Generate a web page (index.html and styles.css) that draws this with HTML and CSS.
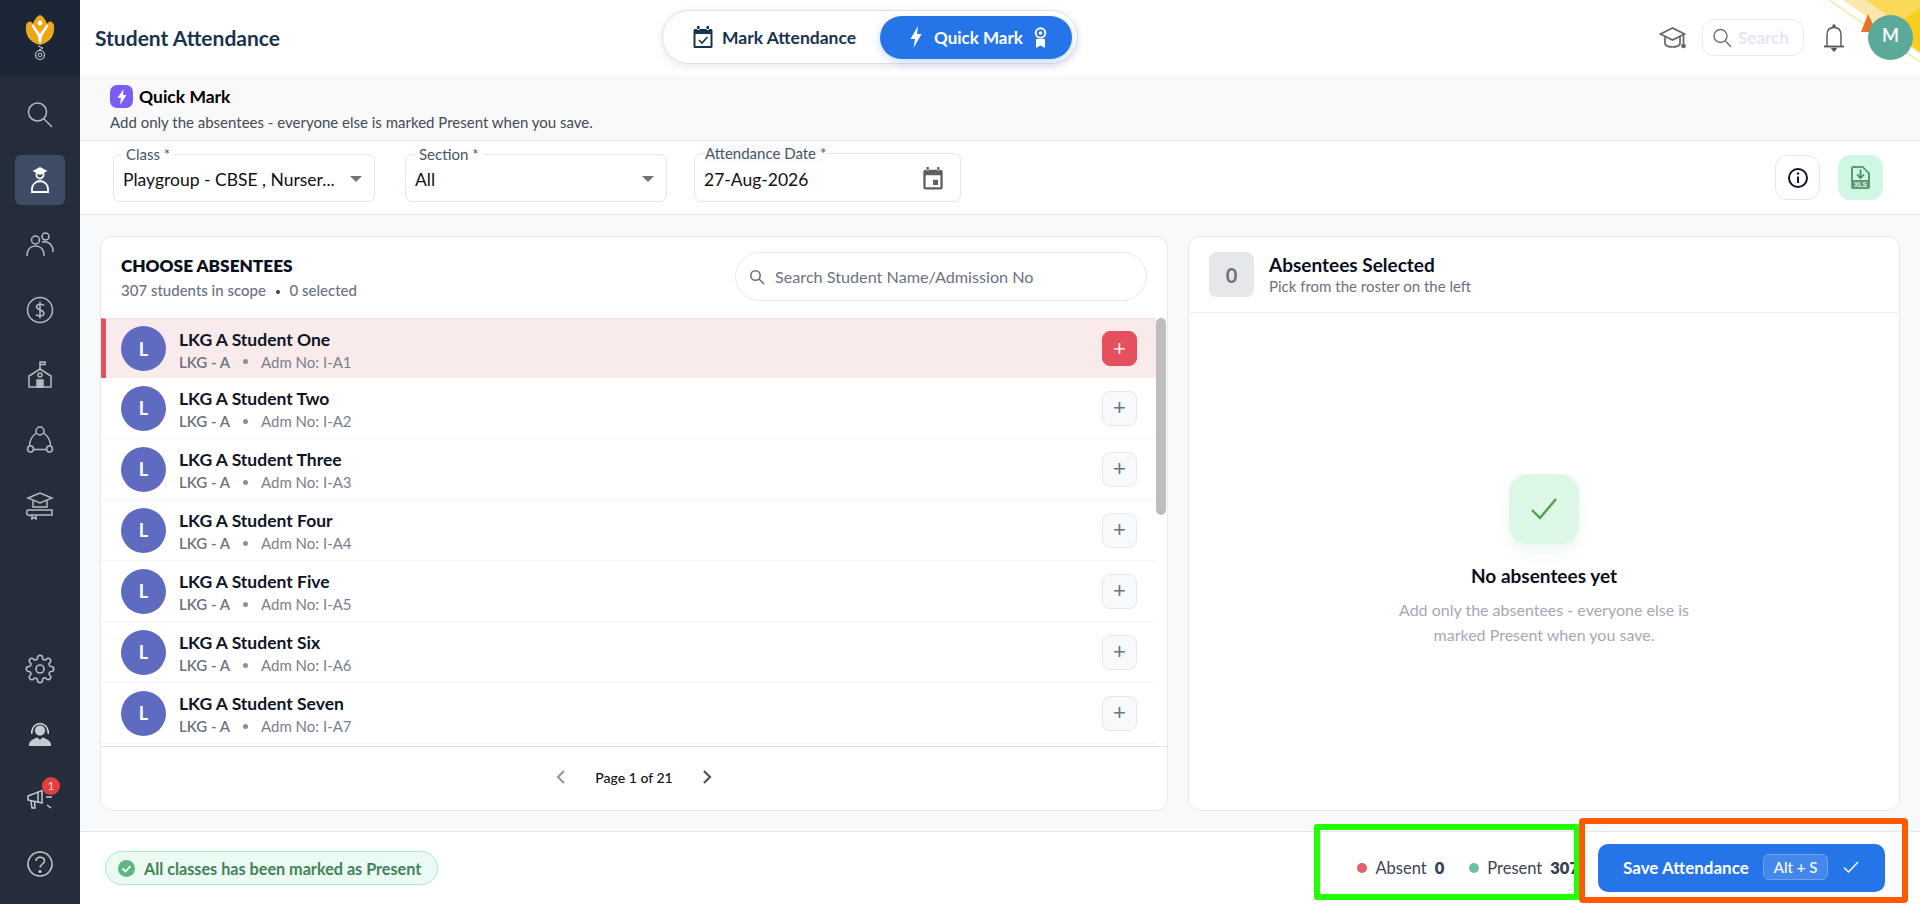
FILE: index.html
```html
<!DOCTYPE html>
<html lang="en">
<head>
  <meta charset="UTF-8">
  <title>Student Attendance</title>
  <meta name="viewport" content="width=device-width, initial-scale=1.0">
  <link rel="stylesheet" href="styles.css">
</head>
<body>
  <aside class="sidebar">
    <div class="logo">
      <svg width="30" height="46" viewBox="0 0 30 46">
        <path d="M1 10 C3 5 7 6 8 9 C9 5 12 1 15 0 C18 1 21 5 22 9 C23 6 27 5 29 10 C30 20 26 27 15 30 C4 27 0 20 1 10Z" fill="#eba81c"/>
        <path d="M8 9 L15 19 L22 9 L23.5 11 L17 21 L16 28 L14 28 L13 21 L6.5 11Z" fill="#fff"/>
        <circle cx="15" cy="8" r="2.4" fill="#fff"/>
        <circle cx="15" cy="40" r="4.5" fill="none" stroke="#c9ccd2" stroke-width="1.2"/>
        <circle cx="15" cy="40" r="1.8" fill="none" stroke="#c9ccd2" stroke-width="1"/>
        <path d="M13 31 L18 33 L14 35" fill="none" stroke="#c9ccd2" stroke-width="1"/>
      </svg>
    </div>
    <nav class="nav-top">
      <a class="nav-item"><svg width="30" height="30" viewBox="0 0 30 30" fill="none" stroke="#b4bac3" stroke-width="1.5"><circle cx="12.5" cy="12" r="9"/><path d="M19 19 L27 27"/></svg></a>
      <a class="nav-item active"><svg width="30" height="30" viewBox="0 0 30 30" fill="none" stroke="#fff" stroke-width="1.8"><path d="M9.5 6 L15 3 L20.5 6 L15 9Z" fill="#fff"/><path d="M11.5 8 V10 A3.5 3.5 0 0 0 18.5 10 V8"/><path d="M7 27 V24 C7 19 11 16.5 15 16 C19 16.5 23 19 23 24 V27Z"/></svg></a>
      <a class="nav-item"><svg width="30" height="30" viewBox="0 0 30 30" fill="none" stroke="#b4bac3" stroke-width="1.5"><circle cx="10.5" cy="10" r="4"/><circle cx="20.5" cy="6.5" r="3.5"/><path d="M2 26 C2 19 6 16 10.5 16 C15 16 19 19 19 26"/><path d="M17 12 C23 11 28 14 28 22"/></svg></a>
      <a class="nav-item"><svg width="30" height="30" viewBox="0 0 30 30" fill="none" stroke="#b4bac3" stroke-width="1.5"><circle cx="15" cy="15" r="12.5"/><path d="M19 10.5 C18 9 12 8.5 11.5 11.5 C11 15 19 14.5 19 18.5 C19 21.5 12.5 21.5 11 19.5 M15 6.5 V23.5"/></svg></a>
      <a class="nav-item"><svg width="30" height="30" viewBox="0 0 30 30" fill="none" stroke="#b4bac3" stroke-width="1.5"><path d="M15 9 V2 H20 V4.5 H15"/><path d="M4 27 V16 L15 9 L26 16 V27Z"/><circle cx="15" cy="15" r="2"/><rect x="12" y="20" width="6" height="7" fill="#b4bac3"/></svg></a>
      <a class="nav-item"><svg width="30" height="30" viewBox="0 0 30 30" fill="none" stroke="#b4bac3" stroke-width="1.5"><circle cx="15" cy="6" r="4"/><circle cx="5.5" cy="24" r="3"/><circle cx="24.5" cy="24" r="3"/><path d="M11.5 8 C7 11 4.5 16 4.5 21 M18.5 8 C23 11 25.5 16 25.5 21 M8.5 24.5 H21.5"/></svg></a>
      <a class="nav-item"><svg width="30" height="30" viewBox="0 0 30 30" fill="none" stroke="#b4bac3" stroke-width="1.5"><path d="M3 8 L15 3 L27 8 L15 13Z"/><path d="M8 11 V17 H22 V11"/><path d="M3 20 H27 V25 H6 A2.5 2.5 0 0 1 3 20Z"/><path d="M7 25 V29 L9 27.5 L11 29 V25"/></svg></a>
    </nav>
    <nav class="nav-bottom">
      <a class="nav-item"><svg width="30" height="30" viewBox="0 0 24 24" fill="none" stroke="#b4bac3" stroke-width="1.3"><circle cx="12" cy="12" r="3.2"/><path d="M19.4 15a1.7 1.7 0 0 0 .3 1.8l.1.1a2 2 0 1 1-2.8 2.8l-.1-.1a1.7 1.7 0 0 0-2.9 1.2V21a2 2 0 1 1-4 0v-.1a1.7 1.7 0 0 0-2.9-1.2l-.1.1a2 2 0 1 1-2.8-2.8l.1-.1a1.7 1.7 0 0 0-1.2-2.9H3a2 2 0 1 1 0-4h.1a1.7 1.7 0 0 0 1.2-2.9l-.1-.1a2 2 0 1 1 2.8-2.8l.1.1a1.7 1.7 0 0 0 2.9-1.2V3a2 2 0 1 1 4 0v.1a1.7 1.7 0 0 0 2.9 1.2l.1-.1a2 2 0 1 1 2.8 2.8l-.1.1a1.7 1.7 0 0 0 1.2 2.9H21a2 2 0 1 1 0 4h-.1a1.7 1.7 0 0 0-1.5 1z"/></svg></a>
      <a class="nav-item"><svg width="26" height="26" viewBox="0 0 30 30" fill="none" stroke="#c6cbd2" stroke-width="1.8"><circle cx="15" cy="11" r="5" fill="#c6cbd2"/><path d="M6 12 A9 9 0 0 1 24 12"/><path d="M5.5 10 V15 M24.5 10 V15"/><path d="M3 28 C3 23 9 21 12 20 L15 23 L18 20 C21 21 27 23 27 28Z" fill="#c6cbd2"/></svg></a>
      <a class="nav-item nav-notice">
        <svg width="26" height="20" viewBox="0 0 26 20" fill="none" stroke="#c6cbd2" stroke-width="1.5"><path d="M1 7 L15 1.5 V14 L1 11Z"/><path d="M11 3 V13"/><path d="M4 12 L5 19 H8 L7.5 13"/><path d="M19 8 H25 M18.5 4 L22 1.5 M20 16 L24 19"/></svg>
        <span class="notice-badge">1</span>
      </a>
      <a class="nav-item"><svg width="30" height="30" viewBox="0 0 30 30" fill="none" stroke="#c6cbd2" stroke-width="1.5"><circle cx="15" cy="15" r="12"/><path d="M11 12 C11 7 19.5 7 19.5 12 C19.5 15 15 15.5 15 18.5"/><circle cx="15" cy="22.5" r=".8" fill="#c6cbd2"/></svg></a>
    </nav>
  </aside>

  <div class="page">
    <header class="topbar">
      <svg class="corner-art" width="100" height="70" viewBox="0 0 100 70">
        <path d="M9 0 L100 62" stroke="#fbe9b8" stroke-width="2"/>
        <path d="M23 0 H100 V54Z" fill="#fbe6ac"/>
        <path d="M46 0 H100 V40Z" fill="#f9d85a"/>
        <path d="M100 8 L68 30 L100 52Z" fill="#f6cf1e"/>
      </svg>
      <h1 class="page-title">Student Attendance</h1>
      <div class="mode-switch">
        <a class="mode-tab">
          <svg width="20" height="24" viewBox="0 0 20 24"><path d="M2 4 H18 A1.5 1.5 0 0 1 19.5 5.5 V21.5 A1.5 1.5 0 0 1 18 23 H2 A1.5 1.5 0 0 1 .5 21.5 V5.5 A1.5 1.5 0 0 1 2 4Z M2.5 9 V21 H17.5 V9Z M4 1 H6.5 V5 H4Z M13.5 1 H16 V5 H13.5Z" fill="#19334d" fill-rule="evenodd"/><path d="M6 15 L9 18 L14.5 12" fill="none" stroke="#19334d" stroke-width="1.6"/></svg>
          Mark Attendance
        </a>
        <a class="mode-tab active">
          <svg width="14" height="24" viewBox="0 0 14 24"><path d="M9 1 L1.5 14 H6 L4.5 23 L12.5 9 H8Z" fill="#fff"/></svg>
          Quick Mark
          <svg width="13" height="24" viewBox="0 0 13 24" fill="none"><circle cx="6.5" cy="8" r="4.8" stroke="#fff" stroke-width="2"/><circle cx="6.5" cy="8" r="1.8" fill="#fff"/><path d="M2 14 H11 V23 L6.5 20.5 L2 23Z" fill="#fff"/></svg>
        </a>
      </div>
      <div class="topbar-right">
        <svg width="28" height="28" viewBox="0 0 28 28" fill="none" stroke="#666" stroke-width="1.7"><path d="M1.5 10 L13.5 4 L25.5 10 L13.5 16Z"/><path d="M6 12.5 V20 C8 24 19 24 21 20 V12.5"/><path d="M24.5 10.5 V20"/><circle cx="24.5" cy="22" r="1.5" fill="#666"/></svg>
        <div class="top-search">
          <svg width="20" height="22" viewBox="0 0 20 22" fill="none" stroke-width="1.4"><circle cx="8.5" cy="9" r="6.5" stroke="#6b7280"/><path d="M13.5 14 L19 20" stroke="#6b7280"/></svg>
          <span>Search</span>
        </div>
        <svg class="bell" width="22" height="28" viewBox="0 0 22 28" fill="none" stroke="#555" stroke-width="1.4"><path d="M4 22 V11 C4 6 7 3.5 11 3.5 C15 3.5 18 6 18 11 V22"/><path d="M1 22.5 H21" stroke-width="1.8"/><path d="M9 24.5 H13 L11 27Z" fill="#555"/><circle cx="11" cy="2" r="1" fill="#555"/></svg>
        <div class="avatar-wrap">
          <span class="corner-flag"></span>
          <div class="avatar">M</div>
        </div>
      </div>
    </header>

    <section class="quick-head">
      <div class="quick-title">
        <span class="quick-icon"><svg width="12" height="18" viewBox="0 0 12 18"><path d="M7.5 1 L1.5 10 H5 L4 17 L10.5 7 H7Z" fill="#fff"/></svg></span>
        Quick Mark
      </div>
      <p class="quick-sub">Add only the absentees - everyone else is marked Present when you save.</p>
    </section>

    <section class="filters">
      <div class="field field-class">
        <label>Class *</label>
        <span class="field-value">Playgroup - CBSE , Nurser...</span>
        <span class="caret"></span>
      </div>
      <div class="field field-section">
        <label>Section *</label>
        <span class="field-value">All</span>
        <span class="caret"></span>
      </div>
      <div class="field field-date">
        <label class="date-label">Attendance Date *</label>
        <span class="field-value">27-Aug-2026</span>
        <svg width="22" height="24" viewBox="0 0 22 26"><path d="M3 4 H19 A2.5 2.5 0 0 1 21.5 6.5 V23 A2.5 2.5 0 0 1 19 25.5 H3 A2.5 2.5 0 0 1 .5 23 V6.5 A2.5 2.5 0 0 1 3 4Z M3 10 V23 H19 V10Z M4 1 H6.5 V5 H4Z M15.5 1 H18 V5 H15.5Z M11 15 H16.5 V20.5 H11Z" fill="#5f5f5f" fill-rule="evenodd"/></svg>
      </div>
      <div class="filter-actions">
        <button class="btn-square btn-info"><svg width="22" height="22" viewBox="0 0 22 22" fill="none"><circle cx="11" cy="11" r="9" stroke="#0d1526" stroke-width="2"/><path d="M11 9.5 V16" stroke="#0d1526" stroke-width="2"/><circle cx="11" cy="6.5" r="1.2" fill="#0d1526"/></svg></button>
        <button class="btn-square btn-xls"><svg width="19" height="23" viewBox="0 0 19 23"><path d="M2 0 H12 L19 7 V21 A2 2 0 0 1 17 23 H2 A2 2 0 0 1 0 21 V2 A2 2 0 0 1 2 0Z" fill="#5a9e6f"/><path d="M2 2 H11.5 L17 7.5 V14 H2Z" fill="#cff7e3"/><path d="M9.5 3.5 V12 M6 8.5 L9.5 12 L13 8.5" fill="none" stroke="#3f8f58" stroke-width="1.7"/><text x="9.5" y="21" class="xls-text">XLS</text></svg></button>
      </div>
    </section>

    <main class="content">
      <section class="card roster">
        <div class="roster-head">
          <div>
            <h2>CHOOSE ABSENTEES</h2>
            <div class="roster-count">307 students in scope <i class="dot-dark"></i> 0 selected</div>
          </div>
          <div class="roster-search">
            <svg width="16" height="16" viewBox="0 0 16 16" fill="none" stroke="#6b7280" stroke-width="1.6"><circle cx="6.5" cy="6.5" r="4.7"/><path d="M10 10 L15 15"/></svg>
            <span>Search Student Name/Admission No</span>
          </div>
        </div>
        <div class="list-wrap">
          <ul class="student-list">
            <li class="student picked"><span class="initial">L</span><div class="student-info"><strong>LKG A Student One</strong><small><b>LKG - A</b><i></i>Adm No: I-A1</small></div><button class="add-btn">+</button></li>
            <li class="student"><span class="initial">L</span><div class="student-info"><strong>LKG A Student Two</strong><small><b>LKG - A</b><i></i>Adm No: I-A2</small></div><button class="add-btn">+</button></li>
            <li class="student"><span class="initial">L</span><div class="student-info"><strong>LKG A Student Three</strong><small><b>LKG - A</b><i></i>Adm No: I-A3</small></div><button class="add-btn">+</button></li>
            <li class="student"><span class="initial">L</span><div class="student-info"><strong>LKG A Student Four</strong><small><b>LKG - A</b><i></i>Adm No: I-A4</small></div><button class="add-btn">+</button></li>
            <li class="student"><span class="initial">L</span><div class="student-info"><strong>LKG A Student Five</strong><small><b>LKG - A</b><i></i>Adm No: I-A5</small></div><button class="add-btn">+</button></li>
            <li class="student"><span class="initial">L</span><div class="student-info"><strong>LKG A Student Six</strong><small><b>LKG - A</b><i></i>Adm No: I-A6</small></div><button class="add-btn">+</button></li>
            <li class="student"><span class="initial">L</span><div class="student-info"><strong>LKG A Student Seven</strong><small><b>LKG - A</b><i></i>Adm No: I-A7</small></div><button class="add-btn">+</button></li>
          </ul>
          <div class="scroll-track"><span class="scroll-thumb"></span></div>
        </div>
        <div class="pager">
          <svg width="12" height="16" viewBox="0 0 12 16" fill="none" stroke="#9a9a9a" stroke-width="2.2"><path d="M9 2 L3 8 L9 14"/></svg>
          <span>Page 1 of 21</span>
          <svg width="12" height="16" viewBox="0 0 12 16" fill="none" stroke="#555" stroke-width="2.2"><path d="M3 2 L9 8 L3 14"/></svg>
        </div>
      </section>

      <section class="card selected">
        <div class="selected-head">
          <span class="count-box">0</span>
          <div>
            <h3>Absentees Selected</h3>
            <p>Pick from the roster on the left</p>
          </div>
        </div>
        <div class="empty">
          <span class="empty-icon"><svg width="28" height="24" viewBox="0 0 28 24" fill="none" stroke="#55a045" stroke-width="2.4"><path d="M2 13 L10 21 L26 2"/></svg></span>
          <h4>No absentees yet</h4>
          <p>Add only the absentees - everyone else is<br>marked Present when you save.</p>
        </div>
      </section>
    </main>

    <footer class="footer">
      <div class="status-pill">
        <svg width="17" height="17" viewBox="0 0 17 17"><circle cx="8.5" cy="8.5" r="8.5" fill="#5fb67f"/><path d="M4.5 8.5 L7.5 11.5 L12.5 6" fill="none" stroke="#fff" stroke-width="1.8"/></svg>
        All classes has been marked as Present
      </div>
      <div class="tally">
        <span class="tally-item"><i class="dot dot-absent"></i>Absent <b>0</b></span>
        <span class="tally-item"><i class="dot dot-present"></i>Present <b>307</b></span>
      </div>
      <button class="save-btn">
        Save Attendance
        <span class="kbd">Alt + S</span>
        <svg width="18" height="14" viewBox="0 0 18 14" fill="none" stroke="#fff" stroke-width="1.4"><path d="M2 7.5 L6.5 12 L16 2"/></svg>
      </button>
    </footer>
  </div>

  <span class="mark mark-green"></span>
  <span class="mark mark-orange"></span>
</body>
</html>
```

FILE: styles.css
```css
* {
  box-sizing: border-box;
}
html, body {
  margin: 0;
  padding: 0;
  height: 100%;
  overflow: hidden;
  font-family: "Lato", "Noto Sans", sans-serif;
  color: #0d1526;
}
body {
  display: flex;
  background: #fff;
}
h1, h2, h3, h4, p, ul {
  margin: 0;
  padding: 0;
}
i {
  font-style: normal;
}

/* sidebar */
.sidebar {
  width: 80px;
  flex: none;
  background: #252d3a;
  display: flex;
  flex-direction: column;
}
.logo {
  height: 76px;
  background: #1c2636;
  display: flex;
  align-items: center;
  justify-content: center;
}
.nav-top {
  padding-top: 14px;
  display: flex;
  flex-direction: column;
  align-items: center;
  gap: 15px;
}
.nav-bottom {
  margin-top: auto;
  padding-bottom: 15px;
  display: flex;
  flex-direction: column;
  align-items: center;
  gap: 15px;
}
.nav-item {
  width: 50px;
  height: 50px;
  border-radius: 6px;
  display: flex;
  align-items: center;
  justify-content: center;
}
.nav-item.active {
  background: #3e4d65;
}
.nav-notice {
  position: relative;
}
.notice-badge {
  position: absolute;
  top: 3px;
  right: 5px;
  width: 18px;
  height: 18px;
  border-radius: 50%;
  background: #e53e3e;
  color: #fbd5d5;
  font-size: 12px;
  line-height: 18px;
  text-align: center;
}

/* main column */
.page {
  flex: 1;
  min-width: 0;
  display: flex;
  flex-direction: column;
}
.topbar {
  height: 75px;
  flex: none;
  background: #fff;
  padding: 0 7px 0 15px;
  display: flex;
  align-items: center;
  position: relative;
}
.corner-art {
  position: absolute;
  top: 0;
  right: 0;
}
.page-title {
  font-size: 21px;
  font-weight: 700;
  color: #19334d;
  width: 567px;
  flex: none;
}
.mode-switch {
  display: flex;
  align-items: center;
  width: 416px;
  height: 54px;
  margin-top: -1px;
  padding: 0 5px 0 30px;
  border: 1px solid #d9dfec;
  border-radius: 27px;
  box-shadow: 0 2px 8px rgba(60, 80, 140, 0.14);
}
.mode-tab {
  display: flex;
  align-items: center;
  gap: 9px;
  font-size: 17.5px;
  font-weight: 700;
  color: #19334d;
  white-space: nowrap;
}
.mode-tab.active {
  width: 192px;
  height: 43px;
  flex: none;
  margin-left: auto;
  padding-left: 29px;
  gap: 11px;
  border-radius: 22px;
  background: #2574e8;
  color: #fff;
  font-size: 17px;
  box-shadow: 0 3px 8px rgba(37, 116, 232, 0.25);
}
.topbar-right {
  margin-left: auto;
  display: flex;
  align-items: center;
  gap: 15px;
  position: relative;
}
.top-search {
  width: 102px;
  height: 37px;
  border: 1px solid #e6eaf3;
  border-radius: 12px;
  display: flex;
  align-items: center;
  gap: 6px;
  padding-left: 9px;
  margin-right: 4px;
  color: #e3e7f1;
  font-size: 17px;
  font-weight: 700;
}
.bell {
  margin-right: 8px;
}
.avatar-wrap {
  position: relative;
  width: 45px;
  height: 45px;
  margin-top: -1px;
}
.avatar {
  position: relative;
  width: 45px;
  height: 45px;
  border-radius: 50%;
  background: #5ca899;
  color: #f2fbf8;
  font-size: 18px;
  font-weight: 700;
  line-height: 41px;
  text-align: center;
}
.corner-flag {
  position: absolute;
  top: -1px;
  left: -7px;
  width: 0;
  height: 0;
  border-left: 7px solid transparent;
  border-right: 9px solid transparent;
  border-bottom: 18px solid #ea7424;
}
.quick-head {
  height: 66px;
  flex: none;
  background: #f9f9f9;
  border-bottom: 1px solid #e5e6f0;
  padding: 10px 30px 0;
}
.quick-title {
  display: flex;
  align-items: center;
  gap: 6px;
  font-size: 17.5px;
  font-weight: 700;
  color: #000;
}
.quick-icon {
  width: 23px;
  height: 23px;
  border-radius: 7px;
  background: #7c5cf5;
  display: flex;
  align-items: center;
  justify-content: center;
}
.quick-sub {
  font-size: 15px;
  line-height: 18px;
  color: #444b57;
  margin-top: 5px;
}

/* filter bar */
.filters {
  height: 74px;
  flex: none;
  background: #fff;
  border-bottom: 1px solid #e5e8f0;
  padding: 13px 37px 0 33px;
  display: flex;
  align-items: flex-start;
}
.field {
  position: relative;
  height: 48px;
  border: 1px solid #e3e7f2;
  border-radius: 7px;
  display: flex;
  align-items: center;
  padding: 2px 9px 0;
  font-size: 17.5px;
}
.field label {
  position: absolute;
  top: -9px;
  left: 8px;
  padding: 0 4px;
  background: #fff;
  color: #4a5563;
  font-size: 15px;
  line-height: 16px;
}
.field label.date-label {
  left: 10px;
  background: #f9f9f9;
  padding: 0;
}
.field-value {
  flex: 1;
  color: #111;
  white-space: nowrap;
}
.caret {
  width: 0;
  height: 0;
  border-left: 6px solid transparent;
  border-right: 6px solid transparent;
  border-top: 6px solid #757575;
  margin-right: 3px;
}
.field-class {
  width: 262px;
}
.field-section {
  width: 262px;
  margin-left: 30px;
}
.field-section label {
  left: 9px;
}
.field-date {
  width: 267px;
  height: 49px;
  margin: -1px 0 0 27px;
  padding-top: 4px;
}
.field-date svg {
  margin: -3px 7px 0 0;
}
.filter-actions {
  margin-left: auto;
  margin-top: 1px;
  display: flex;
  gap: 18px;
}
.btn-square {
  width: 45px;
  height: 45px;
  border-radius: 12px;
  border: 1px solid #e3e7f2;
  background: #fff;
  padding: 0;
  display: flex;
  align-items: center;
  justify-content: center;
}
.btn-xls {
  background: #cff7e3;
  border-color: #cff7e3;
}
.xls-text {
  font-family: "Liberation Sans", sans-serif;
  font-size: 6.5px;
  font-weight: 700;
  fill: #e4f7ec;
  text-anchor: middle;
}

/* panels */
.content {
  flex: 1;
  min-height: 0;
  background: #f8f9fb;
  padding: 21px 20px 20px 20px;
  display: flex;
  gap: 20px;
}
.card {
  background: #fff;
  border: 1px solid #e6e8f0;
  border-radius: 12px;
  display: flex;
  flex-direction: column;
  overflow: hidden;
}
.roster {
  width: 1068px;
  flex: none;
}
.selected {
  flex: 1;
}
.roster-head {
  height: 81px;
  flex: none;
  padding: 18px 20px 0 20px;
  display: flex;
  justify-content: space-between;
  align-items: flex-start;
}
.roster-head h2 {
  font-size: 17.2px;
  font-weight: 800;
  color: #0a0f1c;
  line-height: 22px;
}
.roster-count {
  font-size: 15px;
  line-height: 18px;
  color: #6b7280;
  font-weight: 500;
  margin-top: 4px;
}
.dot-dark {
  display: inline-block;
  width: 4px;
  height: 4px;
  border-radius: 50%;
  background: #374151;
  margin: 0 6px;
  vertical-align: 2px;
}
.roster-search {
  width: 412px;
  height: 49px;
  margin-top: -3px;
  border: 1px solid #e3e7f2;
  border-radius: 25px;
  display: flex;
  align-items: center;
  gap: 10px;
  padding-left: 13px;
  font-size: 16.2px;
  color: #6b7280;
}
.list-wrap {
  height: 429px;
  flex: none;
  border-bottom: 1px solid #e2e2e2;
  display: flex;
  overflow: hidden;
}
.student-list {
  list-style: none;
  flex: 1;
  min-width: 0;
}
.student {
  height: 61px;
  border-bottom: 1px solid #f5f6f8;
  display: flex;
  align-items: center;
  padding: 0 19px 0 20px;
  gap: 13px;
}
.student.picked {
  height: 60px;
  background: #f9eaeb;
  border-top: 1px solid #f6dfe1;
  border-bottom: 0;
  border-left: 5px solid #e5505f;
  padding-left: 15px;
}
.initial {
  width: 45px;
  height: 45px;
  flex: none;
  border-radius: 50%;
  background: #5f6bc0;
  color: #fff;
  font-size: 18px;
  font-weight: 700;
  display: flex;
  align-items: center;
  justify-content: center;
}
.student-info {
  flex: 1;
  min-width: 0;
  padding-top: 3px;
}
.student-info strong {
  display: block;
  font-size: 17.5px;
  font-weight: 700;
  color: #0d1526;
  line-height: 22px;
}
.student-info small {
  display: flex;
  align-items: center;
  font-size: 15px;
  color: #7a808a;
  line-height: 20px;
  margin-top: 1px;
}
.student-info b {
  font-weight: 600;
  color: #6b7280;
}
.student-info small i {
  width: 5px;
  height: 5px;
  border-radius: 50%;
  background: #8a8f98;
  margin: 0 13px;
}
.add-btn {
  width: 35px;
  height: 35px;
  flex: none;
  padding: 0;
  border: 1px solid #e5e7eb;
  border-radius: 8px;
  background: #f8f9fb;
  color: #6b7280;
  font-family: "Liberation Sans", sans-serif;
  font-size: 22px;
  line-height: 1;
}
.picked .add-btn {
  background: #e5505f;
  border-color: #e5505f;
  color: #fbe9eb;
}
.scroll-track {
  width: 10px;
  flex: none;
  margin-right: 1px;
}
.scroll-thumb {
  display: block;
  height: 197px;
  background: #bdbdbd;
  border-radius: 5px;
}
.pager {
  flex: 1;
  display: flex;
  align-items: center;
  justify-content: center;
  gap: 28px;
  font-size: 14px;
  font-weight: 500;
  color: #111;
  padding-bottom: 3px;
}

/* right panel */
.selected-head {
  height: 76px;
  flex: none;
  border-bottom: 1px solid #eceef3;
  padding: 15px 20px 0 20px;
  display: flex;
  gap: 15px;
}
.count-box {
  width: 45px;
  height: 45px;
  border-radius: 8px;
  background: #e5e7eb;
  color: #6b7280;
  font-size: 20px;
  font-weight: 700;
  display: flex;
  align-items: center;
  justify-content: center;
}
.selected-head h3 {
  font-size: 19px;
  font-weight: 700;
  color: #0a0f1c;
  line-height: 24px;
  margin-top: 1px;
}
.selected-head p {
  font-size: 15px;
  color: #6b7280;
  line-height: 18px;
}
.empty {
  flex: 1;
  display: flex;
  flex-direction: column;
  align-items: center;
  padding-top: 161px;
}
.empty-icon {
  width: 70px;
  height: 70px;
  border-radius: 18px;
  background: #def8e8;
  box-shadow: 0 8px 16px rgba(90, 190, 130, 0.12);
  display: flex;
  align-items: center;
  justify-content: center;
}
.empty h4 {
  margin-top: 20px;
  font-size: 19px;
  line-height: 23px;
  font-weight: 700;
  color: #0a0f1c;
}
.empty p {
  margin-top: 10px;
  font-size: 16px;
  line-height: 25px;
  color: #a4a9b4;
  text-align: center;
}

/* footer */
.footer {
  height: 73px;
  flex: none;
  background: #fff;
  border-top: 1px solid #e5e8f0;
  padding: 0 35px 0 25px;
  display: flex;
  align-items: center;
}
.status-pill {
  height: 34px;
  padding: 0 16px 0 12px;
  border: 1px solid #a6ecc8;
  border-radius: 17px;
  background: #ebfaf3;
  color: #3f8458;
  font-size: 16.2px;
  font-weight: 700;
  display: flex;
  align-items: center;
  gap: 9px;
}
.tally {
  margin-left: auto;
  display: flex;
  align-items: center;
  gap: 25px;
  font-size: 16.5px;
  color: #3d4451;
  margin-right: 19px;
}
.tally-item {
  display: flex;
  align-items: center;
  gap: 5px;
}
.tally-item b {
  margin-left: 3px;
  color: #374151;
  font-weight: 800;
}
.dot {
  width: 10px;
  height: 10px;
  border-radius: 50%;
  margin-right: 3px;
}
.dot-absent {
  background: #e5606c;
}
.dot-present {
  background: #6fbf9c;
}
.save-btn {
  width: 287px;
  height: 48px;
  border: none;
  border-radius: 10px;
  background: #2574e8;
  color: #fff;
  font-family: inherit;
  font-size: 17px;
  font-weight: 700;
  display: flex;
  align-items: center;
  gap: 14px;
  padding: 0 0 2px 25px;
}
.kbd {
  height: 26px;
  padding: 0 10px;
  border: 1px solid #6fa3f0;
  border-radius: 6px;
  background: rgba(255, 255, 255, 0.14);
  font-size: 15px;
  font-weight: 500;
  display: flex;
  align-items: center;
}

/* annotation boxes drawn over the shot */
.mark {
  position: absolute;
  pointer-events: none;
}
.mark-green {
  left: 1314px;
  top: 824px;
  width: 266px;
  height: 76px;
  border: 6px solid #22ff00;
  border-radius: 3px;
}
.mark-orange {
  left: 1579px;
  top: 818px;
  width: 329px;
  height: 85px;
  border: 6px solid #ff5a00;
  border-radius: 4px;
}
```
